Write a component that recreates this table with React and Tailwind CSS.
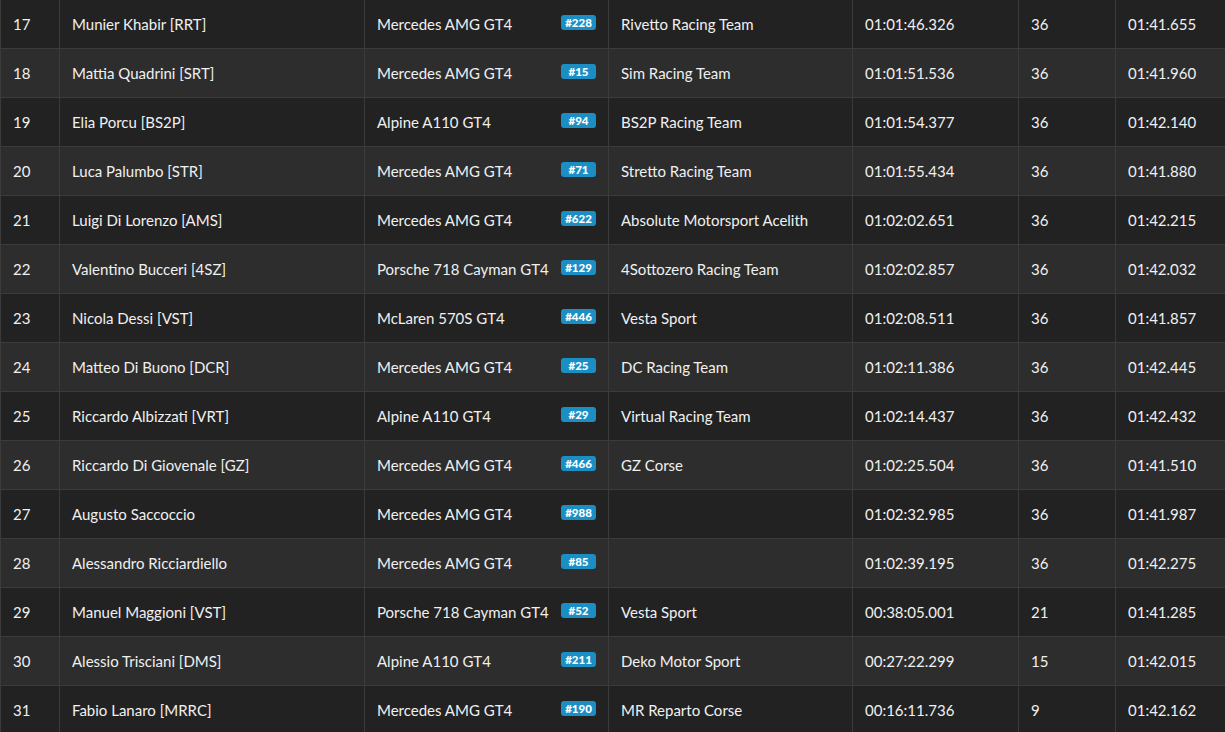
import React from 'react';

const rows = [
  [17, 'Munier Khabir [RRT]', 'Mercedes AMG GT4', '228', 'Rivetto Racing Team', '01:01:46.326', '36', '01:41.655'],
  [18, 'Mattia Quadrini [SRT]', 'Mercedes AMG GT4', '15', 'Sim Racing Team', '01:01:51.536', '36', '01:41.960'],
  [19, 'Elia Porcu [BS2P]', 'Alpine A110 GT4', '94', 'BS2P Racing Team', '01:01:54.377', '36', '01:42.140'],
  [20, 'Luca Palumbo [STR]', 'Mercedes AMG GT4', '71', 'Stretto Racing Team', '01:01:55.434', '36', '01:41.880'],
  [21, 'Luigi Di Lorenzo [AMS]', 'Mercedes AMG GT4', '622', 'Absolute Motorsport Acelith', '01:02:02.651', '36', '01:42.215'],
  [22, 'Valentino Bucceri [4SZ]', 'Porsche 718 Cayman GT4', '129', '4Sottozero Racing Team', '01:02:02.857', '36', '01:42.032'],
  [23, 'Nicola Dessi [VST]', 'McLaren 570S GT4', '446', 'Vesta Sport', '01:02:08.511', '36', '01:41.857'],
  [24, 'Matteo Di Buono [DCR]', 'Mercedes AMG GT4', '25', 'DC Racing Team', '01:02:11.386', '36', '01:42.445'],
  [25, 'Riccardo Albizzati [VRT]', 'Alpine A110 GT4', '29', 'Virtual Racing Team', '01:02:14.437', '36', '01:42.432'],
  [26, 'Riccardo Di Giovenale [GZ]', 'Mercedes AMG GT4', '466', 'GZ Corse', '01:02:25.504', '36', '01:41.510'],
  [27, 'Augusto Saccoccio', 'Mercedes AMG GT4', '988', '', '01:02:32.985', '36', '01:41.987'],
  [28, 'Alessandro Ricciardiello', 'Mercedes AMG GT4', '85', '', '01:02:39.195', '36', '01:42.275'],
  [29, 'Manuel Maggioni [VST]', 'Porsche 718 Cayman GT4', '52', 'Vesta Sport', '00:38:05.001', '21', '01:41.285'],
  [30, 'Alessio Trisciani [DMS]', 'Alpine A110 GT4', '211', 'Deko Motor Sport', '00:27:22.299', '15', '01:42.015'],
  [31, 'Fabio Lanaro [MRRC]', 'Mercedes AMG GT4', '190', 'MR Reparto Corse', '00:16:11.736', '9', '01:42.162'],
];

const cell = 'h-[49px] px-3 border border-[#3b3b3b] align-middle';

export default function App() {
  return (
    <div className="w-[1225px] h-[732px] overflow-hidden bg-[#222222] font-['Lato','Liberation_Sans',sans-serif] text-[15px] text-[#f0f0f0]">
      <table className="-mt-px w-[1226px] table-fixed border-collapse">
        <colgroup>
          <col className="w-[59px]" />
          <col className="w-[305px]" />
          <col className="w-[244px]" />
          <col className="w-[244px]" />
          <col className="w-[166px]" />
          <col className="w-[97px]" />
          <col />
        </colgroup>
        <tbody>
          {rows.map((r, i) => (
            <tr key={r[0]} className={i % 2 === 0 ? 'bg-[#222222]' : 'bg-[#2d2d2d]'}>
              <td className={cell}>{r[0]}</td>
              <td className={cell}>{r[1]}</td>
              <td className={`${cell} relative`}>
                {r[2]}
                {/* car number badge */}
                <span className="absolute right-3 top-[15px] min-w-[35px] h-[15px] rounded-[3px] bg-[#1b8fc4] px-1 text-center text-[11.5px] font-black leading-[15px] text-white">
                  #{r[3]}
                </span>
              </td>
              <td className={cell}>{r[4]}</td>
              <td className={cell}>{r[5]}</td>
              <td className={cell}>{r[6]}</td>
              <td className={cell}>{r[7]}</td>
            </tr>
          ))}
        </tbody>
      </table>
    </div>
  );
}
